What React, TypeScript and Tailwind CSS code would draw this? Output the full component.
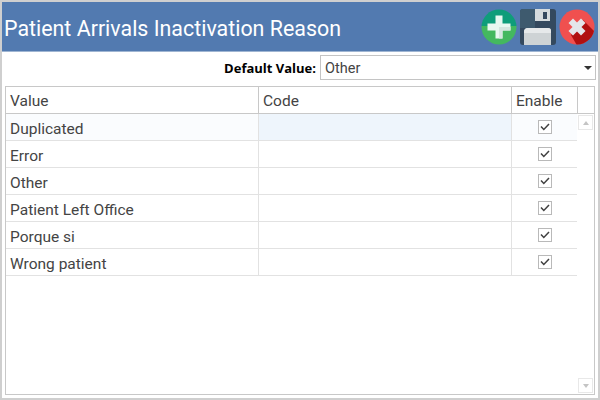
import { useState } from "react";

const FONT = "font-['Roboto','Noto_Sans',sans-serif]";

const initialRows = ["Duplicated", "Error", "Other", "Patient Left Office", "Porque si", "Wrong patient"];

function PlusIcon() {
  return (
    <svg width="36" height="36" viewBox="0 0 36 36">
      <defs>
        <clipPath id="plus-clip">
          <circle cx="18" cy="18" r="17.500" />
        </clipPath>
      </defs>
      <g clipPath="url(#plus-clip)">
        <rect width="36" height="17" fill="#0f9d7a" />
        <rect y="17" width="36" height="19" fill="#44b85f" />
      </g>
      <path d="M14.500 6.500h7v8h8v7h-8v8h-7v-8h-8v-7h8z" fill="#e9f8f1" />
      <path d="M18 18h11.500v3.500h-8v8H18z" fill="#d6e6e0" />
    </svg>
  );
}

function SaveIcon() {
  return (
    <svg width="36" height="36" viewBox="0 0 36 36">
      <rect width="36" height="36" rx="3" fill="#34495e" />
      <path d="M0 3a3 3 0 0 1 3-3h12v19H0z" fill="#3e5a6e" />
      <rect x="15" y="0" width="15" height="12" fill="#d5dbdd" />
      <rect x="23" y="3" width="4" height="7" fill="#34495e" />
      <path d="M4 36V23a4 4 0 0 1 4-4h20a3 3 0 0 1 3 3v14z" fill="#ced3d5" />
      <path d="M4 24v-1a4 4 0 0 1 4-4h20a3 3 0 0 1 3 3v2z" fill="#e6e9ea" />
    </svg>
  );
}

function CloseIcon() {
  return (
    <svg width="36" height="36" viewBox="0 0 36 36">
      <defs>
        <clipPath id="close-clip">
          <circle cx="18" cy="18" r="17.500" />
        </clipPath>
      </defs>
      <circle cx="18" cy="18" r="17.500" fill="#f0504f" />
      <g clipPath="url(#close-clip)">
        <path d="M24 11l16 16v13H20L12 26z" fill="#b11010" />
      </g>
      <path d="M14 9.500l4 4 4-4 4.500 4.500-4 4 4 4-4.500 4.500-4-4-4 4L9.500 22l4-4-4-4z" fill="#e4e6ea" />
    </svg>
  );
}

function CheckBox({ checked, onToggle }: { checked: boolean; onToggle: () => void }) {
  return (
    <button
      type="button"
      onClick={onToggle}
      className="flex h-[14px] w-[14px] items-center justify-center border border-[#b9b9b9] bg-white"
    >
      {checked && (
        <svg width="10" height="8" viewBox="0 0 10 8">
          <path d="M1 3.500l2.800 3L9 1" fill="none" stroke="#404040" strokeWidth="1.500" />
        </svg>
      )}
    </button>
  );
}

export default function App() {
  const [checked, setChecked] = useState(initialRows.map(() => true));

  function toggle(i: number) {
    setChecked(checked.map((c, j) => (j === i ? !c : c)));
  }

  return (
    <div className={`${FONT} flex h-[400px] w-[600px] flex-col border-2 border-[#cfcfcf] bg-white`}>
      <div className="flex h-[50px] shrink-0 items-center justify-between border-b border-[#9fb5d2] bg-[#527ab0] pl-[2px] pr-[3px]">
        <h1 className="pt-[4px] text-[21.400px] leading-none text-white">Patient Arrivals Inactivation Reason</h1>
        <div className="flex items-center gap-[3px]">
          <PlusIcon />
          <SaveIcon />
          <CloseIcon />
        </div>
      </div>

      <div className="flex h-[34px] shrink-0 items-start justify-end pr-[2px] pt-[3px]">
        <span className="mr-[4px] h-[25px] pt-[1px] font-['Open_Sans',sans-serif] text-[13px] font-bold leading-[25px] text-black">
          Default Value:
        </span>
        <div className="flex h-[25px] w-[276px] items-center justify-between border border-[#c4c4c4] pl-[4px] pr-[3px]">
          <span className="pt-[2px] text-[14.500px] text-[#444]">Other</span>
          <span className="h-0 w-0 border-x-[4px] border-t-[4px] border-x-transparent border-t-[#333]" />
        </div>
      </div>

      <div className="mx-[3px] mb-[3px] flex min-h-0 flex-1 flex-col border border-[#c8c8c8]">
        <div className="flex h-[27px] shrink-0 border-b border-[#c8c8c8] text-[15.500px] text-[#444]">
          <div className="flex w-[253px] items-center border-r border-[#c8c8c8] pl-[4px] pt-[4px]">Value</div>
          <div className="flex w-[253px] items-center border-r border-[#c8c8c8] pl-[4px] pt-[4px]">Code</div>
          <div className="flex w-[66px] items-center border-r border-[#c8c8c8] pl-[4px] pt-[4px]">Enable</div>
        </div>
        <div className="flex min-h-0 flex-1">
          <div className="w-[571px]">
            {initialRows.map((name, i) => (
              <div key={name} className="flex h-[27px] border-b border-[#e2e2e2] text-[15.500px] text-[#444]">
                <div className={`flex w-[253px] items-center border-r border-[#e2e2e2] pl-[4px] pt-[5px] ${i === 0 ? "bg-[#fafcfe]" : ""}`}>
                  {name}
                </div>
                <div className={`w-[253px] border-r border-[#e2e2e2] ${i === 0 ? "bg-[#eef5fc]" : ""}`} />
                <div className={`flex w-[65px] items-center justify-center ${i === 0 ? "bg-[#fafcfe]" : ""}`}>
                  <CheckBox checked={checked[i]} onToggle={() => toggle(i)} />
                </div>
              </div>
            ))}
          </div>
          <div className="flex flex-1 flex-col justify-between p-px">
            <div className="flex h-[15px] w-[15px] items-center justify-center border border-[#e8e8e8]">
              <span className="h-0 w-0 border-x-[3.500px] border-b-[4px] border-x-transparent border-b-[#c4c4c4]" />
            </div>
            <div className="flex h-[15px] w-[15px] items-center justify-center border border-[#e8e8e8]">
              <span className="h-0 w-0 border-x-[3.500px] border-t-[4px] border-x-transparent border-t-[#c4c4c4]" />
            </div>
          </div>
        </div>
      </div>
    </div>
  );
}
